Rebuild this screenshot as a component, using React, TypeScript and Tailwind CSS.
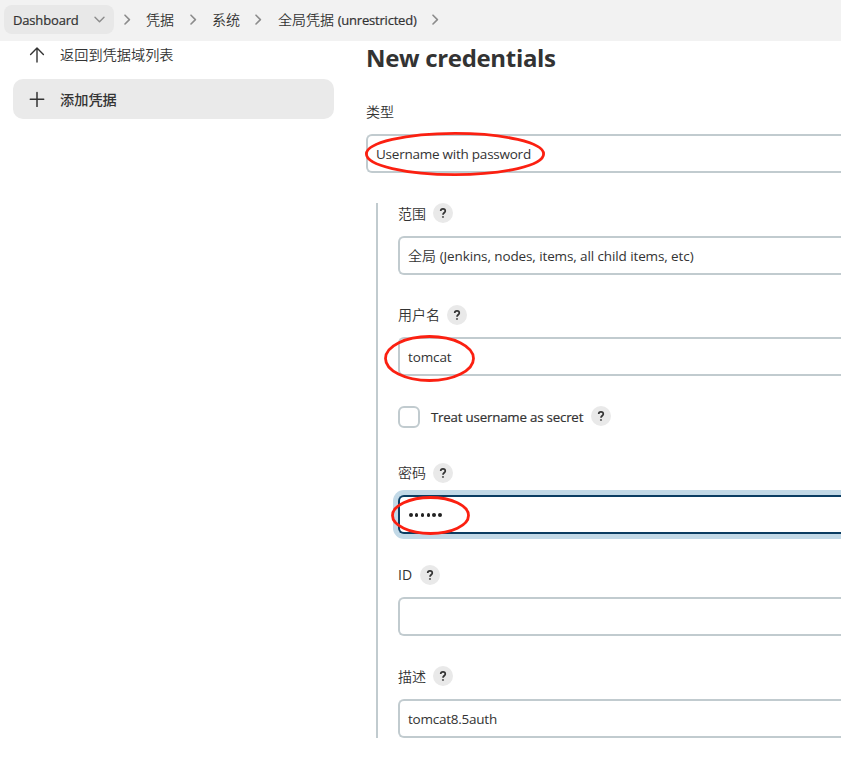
import type { ReactNode } from "react";

function Chevron({ className }: { className: string }) {
  return (
    <svg className={className} width="7" height="12" viewBox="0 0 7 12" fill="none" stroke="#8c8c8c" strokeWidth="1.6" strokeLinecap="round" strokeLinejoin="round">
      <path d="M1 1.2 5.4 5.6 1 10" />
    </svg>
  );
}

function Help() {
  return (
    <button className="flex h-5 w-5 shrink-0 items-center justify-center rounded-full bg-[#e9e9e9]">
      <svg width="20" height="20" viewBox="0 0 20 20" fill="none" stroke="#333" strokeWidth="1.7">
        <path d="M7.7 8.1C7.7 6.6 8.6 5.8 10 5.8s2.3.8 2.3 2.1c0 1.8-2.3 1.9-2.3 3.9" />
        <circle cx="10" cy="14" r="0.3" strokeWidth="1.6" />
      </svg>
    </button>
  );
}

function Label({ children, className = "gap-[7px]" }: { children: ReactNode; className?: string }) {
  return (
    <div className={`flex h-5 items-center ${className}`}>
      <span className="leading-5 font-[350]">{children}</span>
      <Help />
    </div>
  );
}

function Field({ children, className = "border-[#c1cbcf]" }: { children?: ReactNode; className?: string }) {
  return (
    <div className={`flex h-[39px] items-center rounded-l-[6px] border-2 border-r-0 bg-white pl-2 ${className}`}>
      {children}
    </div>
  );
}

export default function App() {
  return (
    <div className="relative h-[765px] w-[841px] overflow-hidden bg-white font-['Open_Sans','Noto_Sans_CJK_SC',sans-serif] text-[14px] whitespace-nowrap text-[#333]">
      <header className="flex h-[41px] items-center bg-[#f2f2f2] pb-[2px] pl-1 leading-5">
        <button className="flex h-[29px] w-[110px] items-center rounded-lg bg-[#e8e8e8] pl-[9px]">
          <span className="w-[66px] pt-px text-left text-[13px] font-medium tracking-[-0.16px] [-webkit-text-stroke:0.2px]">Dashboard</span>
          <svg className="ml-[15px]" width="11" height="8" viewBox="0 0 11 8" fill="none" stroke="#8c8c8c" strokeWidth="1.4" strokeLinecap="round" strokeLinejoin="round">
            <path d="M1 1.2 5.5 5.8 10 1.2" />
          </svg>
        </button>
        <Chevron className="ml-[10px] shrink-0" />
        <span className="ml-[15px] w-[28px] font-[350]">凭据</span>
        <Chevron className="ml-[16px] shrink-0" />
        <span className="ml-[15px] w-[28px] font-[350]">系统</span>
        <Chevron className="ml-[15px] shrink-0" />
        <span className="ml-[16px] w-[138px] font-[350]">
          全局凭据 <span className="text-[13px] font-medium tracking-[-0.2px] [-webkit-text-stroke:0.2px]">(unrestricted)</span>
        </span>
        <Chevron className="ml-[16px] shrink-0" />
      </header>

      <div className="flex">
        <nav className="w-[366px] shrink-0 pl-[13px]">
          <a className="flex h-[38px] items-start pt-1 pl-4 leading-5">
            <svg className="mt-[2px] mr-[15px]" width="16" height="16" viewBox="0 0 16 16" fill="none" stroke="#333" strokeWidth="1.4" strokeLinecap="round" strokeLinejoin="round">
              <path d="M8 15V1.2M1.6 7.4 8 1l6.4 6.4" />
            </svg>
            <span className="text-[14.2px] font-[350]">返回到凭据域列表</span>
          </a>
          <a className="flex h-10 w-[321px] items-center rounded-[10px] bg-[#eaeaea] pl-4 leading-5">
            <svg className="mr-[15px]" width="16" height="16" viewBox="0 0 16 16" fill="none" stroke="#333" strokeWidth="1.5" strokeLinecap="round">
              <path d="M8 1.5v14M1.3 8.3h13.4" />
            </svg>
            <span className="pt-[2px] text-[14.2px] font-medium">添加凭据</span>
          </a>
        </nav>

        <main className="min-w-0 flex-1">
          <h1 className="h-[34px] text-[24px] leading-[34px] font-bold tracking-[-0.32px]">New credentials</h1>
          <div className="mt-[27px] h-5 leading-5 font-[350]">类型</div>
          <div className="mt-3">
            <Field>
              <span className="pt-[2px] text-[13.5px] tracking-[-0.24px]">Username with password</span>
            </Field>
          </div>

          <section className="mt-[30px] ml-[10px] border-l-2 border-[#c1cbcf] pl-5">
            <Label className="gap-[7px] [&>span]:pt-[2px]">范围</Label>
            <div className="mt-[13px]">
              <Field>
                <span className="font-[350]">
                  全局 <span className="text-[13.5px] font-normal tracking-[-0.11px]">(Jenkins, nodes, items, all child items, etc)</span>
                </span>
              </Field>
            </div>

            <div className="mt-[30px]">
              <Label>用户名</Label>
            </div>
            <div className="mt-3">
              <Field>
                <span className="pt-[2px] text-[13.5px] tracking-[-0.12px]">tomcat</span>
              </Field>
            </div>

            <div className="mt-[30px] flex h-[22px] items-start">
              <span className="h-[22px] w-[22px] rounded-[6px] border-2 border-[#c1cbcf] bg-white" />
              <span className="ml-[11px] w-[160px] text-[13.3px] leading-[22px] font-medium tracking-[-0.2px] [-webkit-text-stroke:0.2px]">Treat username as secret</span>
              <Help />
            </div>

            <div className="mt-[35px]">
              <Label>密码</Label>
            </div>
            <div className="mt-3">
              <Field className="border-[#0b3d62] shadow-[0_0_0_5px_#c2d9e7]">
                <span className="flex gap-[2.3px] pt-px pl-[1.2px]">
                  {[0, 1, 2, 3, 4, 5].map((i) => (
                    <span key={i} className="h-[3.5px] w-[3.5px] rounded-full bg-[#222]" />
                  ))}
                </span>
              </Field>
            </div>

            <div className="mt-[31px]">
              <Label className="gap-2">
                <span className="font-normal">ID</span>
              </Label>
            </div>
            <div className="mt-3">
              <Field />
            </div>

            <div className="mt-[30px]">
              <Label className="gap-[7px] [&>span]:pt-[2px]">描述</Label>
            </div>
            <div className="mt-[13px]">
              <Field>
                <span className="pt-[2px] text-[13.5px] tracking-[-0.24px]">tomcat8.5auth</span>
              </Field>
            </div>
          </section>
        </main>
      </div>

      <svg className="pointer-events-none absolute inset-0" width="841" height="765" viewBox="0 0 841 765" fill="none" stroke="#fb2011" strokeWidth="2.8">
        <ellipse cx="455" cy="154" rx="88.6" ry="20.6" />
        <ellipse cx="429.5" cy="358.5" rx="44" ry="22" />
        <ellipse cx="430.5" cy="515.5" rx="38" ry="18" />
      </svg>
    </div>
  );
}
